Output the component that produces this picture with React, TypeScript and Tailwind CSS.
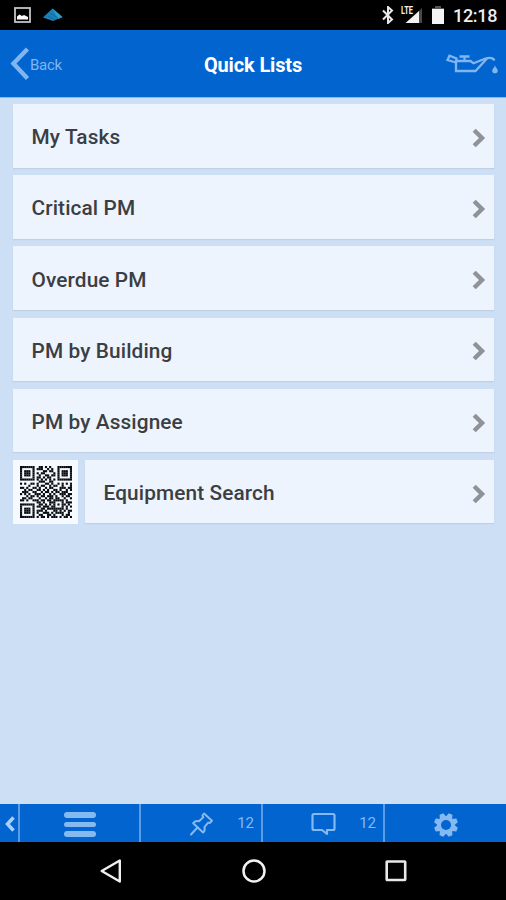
import React from "react";

const lists = ["My Tasks", "Critical PM", "Overdue PM", "PM by Building", "PM by Assignee"];

const qrRows = [
  "1111111001101010001111111",
  "1000001011100101001000001",
  "1011101000011011001011101",
  "1011101010110000101011101",
  "1011101001001101101011101",
  "1000001011010110001000001",
  "1111111010101010101111111",
  "0000000001110011000000000",
  "1010011010001101001010101",
  "0000100010110010110010001",
  "1101001101001011000111011",
  "0010110011010100110100101",
  "0111001100101101011011100",
  "1010100111010010100111011",
  "0001011010110111010010110",
  "0110110001001011011001001",
  "1101001110110110111110100",
  "0000000011010011100010111",
  "1111111001101010101011010",
  "1000001011011101100010101",
  "1011101000110111111110100",
  "1011101011101000110101011",
  "1011101010011101011110010",
  "1000001001100110100010110",
  "1111111010110101110101101",
];

function QrCode() {
  return (
    <svg viewBox="0 0 25 25" className="h-[52px] w-[52px]" fill="#080b10" aria-label="QR code">
      {qrRows.map((row, y) =>
        row.split("").map((cell, x) =>
          cell === "1" ? <rect key={`${x}-${y}`} x={x} y={y} width="1.02" height="1.02" /> : null,
        ),
      )}
    </svg>
  );
}

function Chevron() {
  return (
    <svg viewBox="0 0 14 20" className="h-5 w-3.5 shrink-0" fill="none" stroke="#8f9297" strokeWidth="4.4">
      <path d="M2.200 2.300 10 10l-7.800 7.700" />
    </svg>
  );
}

function ListRow({ label }: { label: string }) {
  return (
    <button className="flex h-[63.5px] min-w-0 grow items-center justify-between bg-[#eef4fd] pr-[8px] pl-[18.500px] text-left shadow-[0_1px_1px_#bfd0e4]">
      <span className="pt-[3px] text-[20.800px] leading-6 font-medium tracking-[0.120px] text-[#3b3e43]">{label}</span>
      <span className="pt-1"><Chevron /></span>
    </button>
  );
}

function StatusBar() {
  return (
    <div className="flex h-[30px] shrink-0 items-center bg-black pr-[9px] pl-[14px] text-white">
      <svg viewBox="0 0 17 16" className="h-4 w-[17px]">
        <rect x="1" y="1" width="15" height="14" fill="none" stroke="#c4c4c4" strokeWidth="1.8" />
        <path d="M3 12.5V9.500L5.500 7.500 8 9l2-1 4 2v2.500z" fill="#fff" />
      </svg>
      <svg viewBox="0 0 20 14" className="ml-3 h-3.5 w-5">
        <path d="M0 9.500 9.500.5 19.500 9 10 13z" fill="#1c80b5" />
        <path d="M9.500.5 19.500 9 15 11z" fill="#2f9bc8" />
        <path d="m7 5 8 5M5 8l7 4" stroke="#0a5f90" strokeWidth=".6" />
      </svg>
      <div className="ml-auto flex items-center">
        <svg viewBox="0 0 13 18" className="h-[18px] w-[13px]" fill="none" stroke="#e8e8e8" strokeWidth="2">
          <path d="m1 4.500 9 9L6 17V1l4 3.500-9 9" />
        </svg>
        <svg viewBox="0 0 23 20" className="ml-[6px] h-5 w-[23px]">
          <path d="M21 3v15h-4V7z" fill="#484848" />
          <path d="M18 6v12H4.500z" fill="#f2f2f2" />
          <text x="0" y="8.500" fill="#f4f4f4" stroke="#000" strokeWidth=".6" paintOrder="stroke" fontSize="10" fontWeight="700" textLength="12" lengthAdjust="spacingAndGlyphs">LTE</text>
        </svg>
        <svg viewBox="0 0 12 18" className="ml-[8px] h-[18px] w-3">
          <path d="M0 2h3V0h6v2h3v16H0z" fill="#555" />
          <path d="M0 3h12v15H0z" fill="#f4f4f4" />
        </svg>
        <span className="ml-[9px] w-[44px] pt-[2px] text-[18px] leading-5 font-medium tracking-[-0.300px] whitespace-nowrap text-[#eee]">12:18</span>
      </div>
    </div>
  );
}

function Header() {
  return (
    <header className="grid h-[67px] shrink-0 grid-cols-3 items-center bg-[#0164cf] text-[#80b5ef]">
      <button className="flex items-center pl-[10px]">
        <svg viewBox="0 0 20 34" className="h-[34px] w-5" fill="none" stroke="currentColor" strokeWidth="4.400">
          <path d="M17.500 2 3.500 16.500l14 15" />
        </svg>
        <span className="pt-[2px] text-[15px] leading-5 tracking-[-0.250px]">Back</span>
      </button>
      <h1 className="pt-[3px] text-center text-[20px] leading-6 font-bold tracking-[-0.150px] text-white">Quick Lists</h1>
      <svg viewBox="0 0 52 20" className="mr-[8px] h-5 w-[52px] justify-self-end" fill="none" stroke="currentColor" strokeWidth="2.300">
        <path d="M10 8.500 1.500 6 3.500 1.800 10.500 4.500z" />
        <path d="M10 7h14.500l3 2.200 12-4.700q7-2 9 2M10 6v11h19.500L41 4.500M18.500 6V2.500M13.500 2.500h10" />
        <path d="M49 10.500c0 3-2.800 4-2.800 6.200 0 3.500 5.600 3.500 5.600 0 0-2.200-2.800-3.200-2.800-6.200" fill="currentColor" stroke="none" />
      </svg>
    </header>
  );
}

function TabBar() {
  return (
    <nav className="flex h-[38px] shrink-0 bg-[#0164cf] text-[#85b9f1]">
      <button className="flex w-[19.500px] items-center border-r-2 border-[#5a9ce5] pl-[3.500px]">
        <svg viewBox="0 0 12 16" className="mt-[2px] h-4 w-3 shrink-0" fill="none" stroke="#a6d0fb" strokeWidth="3.500">
          <path d="M9.500 1.500 3.500 8l6 6.500" />
        </svg>
      </button>
      <button className="flex w-[121.500px] items-center justify-center border-r-2 border-[#5a9ce5] pl-[2px]">
        <span className="mt-[3px] flex w-8 flex-col gap-1">
          <span className="h-[5.500px] rounded-full bg-current" />
          <span className="h-[5.500px] rounded-full bg-current" />
          <span className="h-[5.500px] rounded-full bg-current" />
        </span>
      </button>
      <button className="flex w-[122px] items-center justify-between border-r-2 border-[#5a9ce5] pr-[7px] pl-[49px]">
        <svg viewBox="0 0 24 24" className="mt-[2px] h-6 w-6" fill="none" stroke="currentColor" strokeWidth="2" strokeLinejoin="round">
          <path d="m14 1.500 8 7.200-2.300 2.300-1.500-.4-3.800 4.500q1.100 3.500-1.300 5.400L3.200 11.200Q5.300 8.500 9 9.300l4.300-4-.9-1.800z" />
          <path d="M7.500 15.500 1 22.500" strokeLinecap="round" />
        </svg>
        <span className="text-[15px] leading-5">12</span>
      </button>
      <button className="flex w-[122px] items-center justify-between border-r-2 border-[#5a9ce5] pr-[7px] pl-[48px]">
        <svg viewBox="0 0 25 24" className="mt-[2px] h-6 w-[25px]" fill="none" stroke="currentColor" strokeWidth="2.200" strokeLinejoin="round">
          <path d="M3 2h19q1.500 0 1.500 1.500v13q0 1.500-1.500 1.500h-6v4l-5-4H3q-1.500 0-1.500-1.500v-13Q1.500 2 3 2z" />
        </svg>
        <span className="text-[15px] leading-5">12</span>
      </button>
      <button className="flex grow items-center justify-center">
        <svg viewBox="-12 -12 24 24" className="mt-[3px] h-6 w-6" fill="none">
          <circle r="7" stroke="currentColor" strokeWidth="4" />
          <g fill="currentColor">
            {[22.5, 67.5, 112.5, 157.5, 202.5, 247.5, 292.5, 337.5].map((angle) => (
              <path key={angle} d="M-3.500-7.500-2-12H2l1.500 4.500z" transform={`rotate(${angle})`} />
            ))}
          </g>
        </svg>
      </button>
    </nav>
  );
}

function SystemNav() {
  return (
    <div className="flex h-[58px] shrink-0 items-center justify-between bg-black pr-[98px] pl-[99px]">
      <svg viewBox="0 0 24 24" className="h-6 w-6" fill="none" stroke="#efefef" strokeWidth="2.400" strokeLinejoin="round">
        <path d="M20.800 1.500v21L2.700 12z" />
      </svg>
      <svg viewBox="0 0 24 24" className="h-6 w-6" fill="none" stroke="#f2f2f2" strokeWidth="2.500">
        <circle cx="12" cy="12" r="10.500" />
      </svg>
      <svg viewBox="0 0 24 24" className="h-6 w-6" fill="none" stroke="#e8e8e8" strokeWidth="2.600" strokeLinejoin="round">
        <rect x="2.700" y="2.500" width="18.500" height="18.500" rx=".5" />
      </svg>
    </div>
  );
}

export default function App() {
  return (
    <div className="flex h-[900px] w-[506px] flex-col overflow-hidden bg-[#cddff4] font-[Roboto,sans-serif]">
      <StatusBar />
      <Header />
      <main className="flex grow flex-col gap-[7.700px] border-t border-[#8bb9eb] pt-[6px] pr-3 pl-[13px]">
        {lists.map((label) => (
          <div key={label} className="flex"><ListRow label={label} /></div>
        ))}
        <div className="flex gap-[7px]">
          <div className="flex h-[64px] w-[65px] shrink-0 items-center justify-center bg-[#f6faff]"><QrCode /></div>
          <ListRow label="Equipment Search" />
        </div>
      </main>
      <TabBar />
      <SystemNav />
    </div>
  );
}
